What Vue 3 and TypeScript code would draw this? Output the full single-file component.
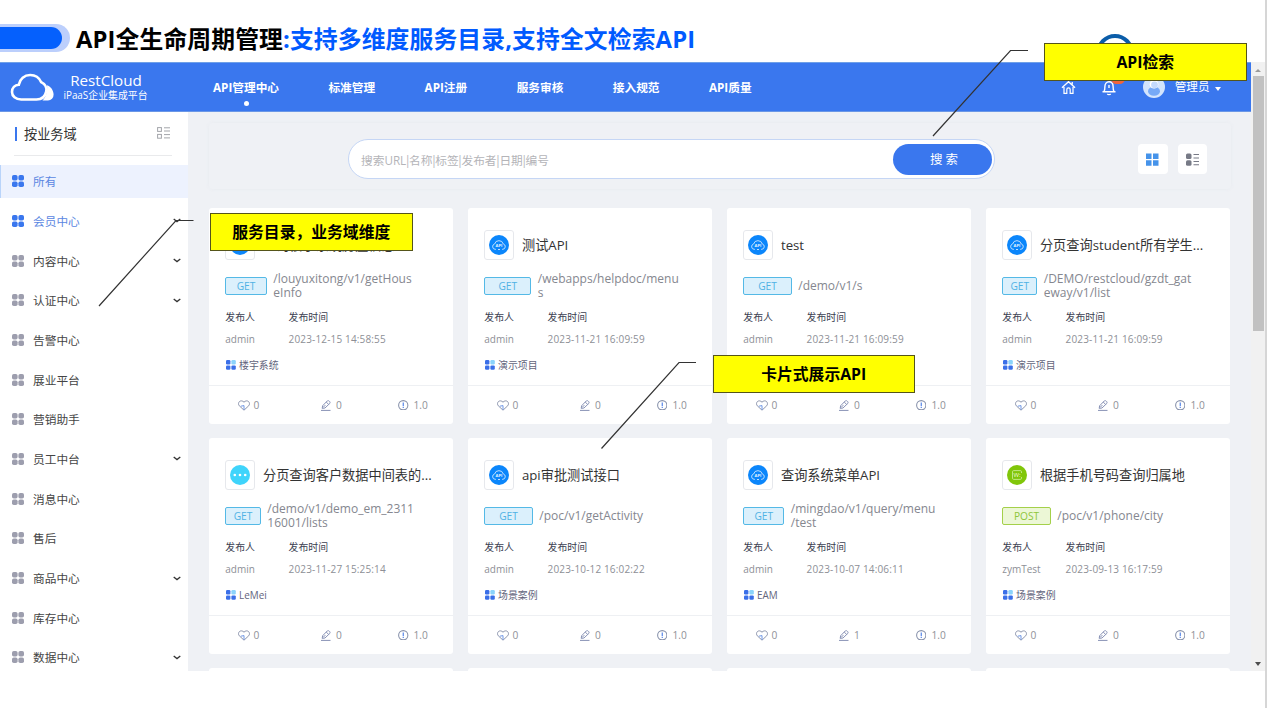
<script setup lang="ts">
interface MenuItem {
  label: string
  open?: boolean
  tone?: 'selected' | 'highlight'
}
interface ApiCard {
  title: string
  icon: 'api' | 'dots' | 'ws'
  method: 'GET' | 'POST'
  badge: number
  lines: string[]
  user: string
  time: string
  tag: string
  edits: number
}

const nav: string[] = ['API管理中心', '标准管理', 'API注册', '服务审核', '接入规范', 'API质量']
const searchFields: string[] = ['搜索URL', '名称', '标签', '发布者', '日期', '编号']

const menu: MenuItem[] = [
  { label: '所有', tone: 'selected' },
  { label: '会员中心', tone: 'highlight', open: true },
  { label: '内容中心', open: true },
  { label: '认证中心', open: true },
  { label: '告警中心' },
  { label: '展业平台' },
  { label: '营销助手' },
  { label: '员工中台', open: true },
  { label: '消息中心' },
  { label: '售后' },
  { label: '商品中心', open: true },
  { label: '库存中心' },
  { label: '数据中心', open: true },
]

const cards: ApiCard[] = [
  { title: '查询楼宇系统房屋信息', icon: 'api', method: 'GET', badge: 41.5, lines: ['/louyuxitong/v1/getHous', 'eInfo'], user: 'admin', time: '2023-12-15 14:58:55', tag: '楼宇系统', edits: 0 },
  { title: '测试API', icon: 'api', method: 'GET', badge: 47, lines: ['/webapps/helpdoc/menu', 's'], user: 'admin', time: '2023-11-21 16:09:59', tag: '演示项目', edits: 0 },
  { title: 'test', icon: 'api', method: 'GET', badge: 48.5, lines: ['/demo/v1/s'], user: 'admin', time: '2023-11-21 16:09:59', tag: '', edits: 0 },
  { title: '分页查询student所有学生...', icon: 'api', method: 'GET', badge: 35, lines: ['/DEMO/restcloud/gzdt_gat', 'eway/v1/list'], user: 'admin', time: '2023-11-21 16:09:59', tag: '演示项目', edits: 0 },
  { title: '分页查询客户数据中间表的...', icon: 'dots', method: 'GET', badge: 35.5, lines: ['/demo/v1/demo_em_2311', '16001/lists'], user: 'admin', time: '2023-11-27 15:25:14', tag: 'LeMei', edits: 0 },
  { title: 'api审批测试接口', icon: 'api', method: 'GET', badge: 48.5, lines: ['/poc/v1/getActivity'], user: 'admin', time: '2023-10-12 16:02:22', tag: '场景案例', edits: 0 },
  { title: '查询系统菜单API', icon: 'api', method: 'GET', badge: 41, lines: ['/mingdao/v1/query/menu', '/test'], user: 'admin', time: '2023-10-07 14:06:11', tag: 'EAM', edits: 1 },
  { title: '根据手机号码查询归属地', icon: 'ws', method: 'POST', badge: 48.5, lines: ['/poc/v1/phone/city'], user: 'zymTest', time: '2023-09-13 16:17:59', tag: '场景案例', edits: 0 },
]
</script>

<template>
  <div class="slide">
    <div class="heading">
      <div class="pill"><div class="pill-core"></div></div>
      <h1>API全生命周期管理<span>:支持多维度服务目录,支持全文检索API</span></h1>
    </div>

    <div class="window">
      <div class="app">
        <header>
          <svg class="logo" viewBox="0 0 44 29">
            <path d="M32.500 27.400H38a5.600 5.600 0 0 0 5.600-5.800c0-4.600-3.200-8.400-6.600-9.400.6 6.300-1 12-4.500 15.200z" fill="#fff" />
            <path d="M11.200 26.500C5.600 26.500 2 23.200 2 18.900c0-4 2.800-6.900 6.800-7.200C9.800 5.800 14.400 2 20.200 2c5 0 9 2.700 11 7.200 4 2 5.800 5.400 5 9.300-1 4.800-4.600 8-9.700 8z" fill="#3a77ee" stroke="#fff" stroke-width="2.600" />
          </svg>
          <div class="brand">
            <div class="brand-name">RestCloud</div>
            <div class="brand-sub">iPaaS企业集成平台</div>
          </div>
          <nav>
            <a v-for="(n, i) in nav" :key="n" :class="{ current: i === 0 }">{{ n }}</a>
          </nav>
          <div class="tools">
            <svg class="home" viewBox="0 0 16 16" fill="none" stroke="#fff" stroke-width="1.300">
              <path d="M1 8.300 8 1.800l7 6.500M12 4.800V2.200M3.200 7.500v6.800h3V10c0-1 .7-1.600 1.800-1.600s1.800.6 1.800 1.600v4.300h3V7.500" />
            </svg>
            <span class="bell">
              <svg viewBox="0 0 16 17" fill="none" stroke="#fff" stroke-width="1.400">
                <path d="M1.500 12.800h13M3 12.600c.8-1 .9-2 .9-5C3.900 4.700 5.500 2.800 8 2.800s4.100 1.900 4.100 4.800c0 3 .1 4 .9 5M6.300 14.900c.8.800 2.600.8 3.400 0M8 6v3" />
              </svg>
              <i></i>
            </span>
            <svg class="avatar" viewBox="0 0 22 22">
              <circle cx="11" cy="11" r="11" fill="#d3e4fd" />
              <ellipse cx="11" cy="15.200" rx="6" ry="4.600" fill="#76a9f7" />
              <circle cx="11" cy="8.200" r="4.300" fill="#fff" />
              <circle cx="11.500" cy="8.800" r="3.400" fill="#c4dafd" />
            </svg>
            <span class="who">管理员</span>
            <span class="caret"></span>
          </div>
        </header>

        <div class="body">
          <aside>
            <div class="side-head">
              <b></b><span>按业务域</span>
              <svg viewBox="0 0 13 12" fill="none" stroke="#a3a5aa">
                <rect x=".6" y=".6" width="3.800" height="3.800" /><rect x=".6" y="7.400" width="3.800" height="3.800" />
                <path d="M7 .8h6M7 4h6M7 7.600h6M7 10.900h6" />
              </svg>
            </div>
            <div class="side-line"></div>
            <div v-for="m in menu" :key="m.label" class="item" :class="m.tone">
              <svg class="quad" viewBox="0 0 12 12" fill="currentColor">
                <rect width="5.600" height="5.600" rx="1.800" /><rect x="6.400" width="5.600" height="5.600" rx="1.800" />
                <rect y="6.400" width="5.600" height="5.600" rx="1.800" /><rect x="6.400" y="6.400" width="5.600" height="5.600" rx="1.800" />
              </svg>
              <span>{{ m.label }}</span>
              <svg v-if="m.open" class="chev" viewBox="0 0 8 5" fill="none" stroke="#333" stroke-width="1.300"><path d="M.7 1 4 3.600 7.300 1" /></svg>
            </div>
          </aside>

          <main>
            <div class="panel">
              <div class="search">
                <p><template v-for="(f, i) in searchFields" :key="f"><i v-if="i > 0">|</i>{{ f }}</template></p>
                <button>搜 索</button>
              </div>
              <div class="views">
                <div>
                  <svg viewBox="0 0 13 13" fill="#4593ea"><path d="M0 .5h5.500V6H0zM7 .5h5.500V6H7zM0 7.300h5.500v5.500H0zM7 7.300h5.500v5.500H7z" /></svg>
                </div>
                <div>
                  <svg viewBox="0 0 13 13" fill="#777a86"><rect y=".5" width="5.500" height="5.500" rx="1.500" /><rect y="7.200" width="5.500" height="5.500" rx="1.500" /><path d="M7.500 1h5.500v1H7.500zM7.500 4.500h5.500v1H7.500zM7.500 8h5.500v1H7.500zM7.500 11.300h5.500v1H7.500z" /></svg>
                </div>
              </div>
            </div>

            <div class="grid">
              <article v-for="c in cards" :key="c.title">
                <div class="top">
                  <div class="thumb">
                    <svg v-if="c.icon === 'api'" viewBox="0 0 20 20">
                      <circle cx="10" cy="10" r="10" fill="#0b86fb" />
                      <path d="M7 14.300H6.200a2.700 2.700 0 0 1-.6-5.300 4.500 4.500 0 0 1 8.700 0 2.700 2.700 0 0 1-.6 5.300H13M9 14.500h2" fill="none" stroke="#cfe8ff" stroke-width=".9" />
                      <text x="10" y="12.200" text-anchor="middle" font-size="4.200" font-weight="700" fill="#e4f2ff">API</text>
                    </svg>
                    <svg v-else-if="c.icon === 'dots'" viewBox="0 0 20 20">
                      <circle cx="10" cy="10" r="10" fill="#3fd4fb" />
                      <g fill="#fff"><circle cx="4.800" cy="10" r="1.300" /><circle cx="10" cy="10" r="1.300" /><circle cx="15.200" cy="10" r="1.300" /></g>
                    </svg>
                    <svg v-else viewBox="0 0 20 20">
                      <circle cx="10" cy="10" r="10" fill="#80c60a" />
                      <path d="M14.500 8V6.800c0-.8-.4-1.200-1.200-1.200H6.700c-.8 0-1.200.4-1.200 1.200v6.400c0 .8.400 1.200 1.200 1.200h6.600c.8 0 1.200-.4 1.200-1.200V12" fill="none" stroke="#c8eb8e" stroke-width=".9" />
                      <text x="10" y="12.300" text-anchor="middle" font-size="6" fill="#eefbd5">W:</text>
                    </svg>
                  </div>
                  <h2>{{ c.title }}</h2>
                </div>
                <div class="route">
                  <span class="method" :class="{ post: c.method === 'POST' }" :style="{ width: c.badge + 'px' }">{{ c.method }}</span>
                  <div class="path"><div v-for="l in c.lines" :key="l">{{ l }}</div></div>
                </div>
                <div class="meta labels"><span>发布人</span><span>发布时间</span></div>
                <div class="meta values"><span>{{ c.user }}</span><span class="time">{{ c.time }}</span></div>
                <div class="tag">
                  <svg viewBox="0 0 10 10" fill="#3a6fe8"><rect width="4.400" height="4.400" rx="1.200" /><rect x="5.400" width="4.400" height="4.400" rx="1.200" fill="#8bd3fb" /><rect y="5.400" width="4.400" height="4.400" rx="1.200" /><rect x="5.400" y="5.400" width="4.400" height="4.400" rx="1.200" /></svg>
                  <span>{{ c.tag }}</span>
                </div>
                <footer>
                  <div class="stat like">
                    <svg viewBox="0 0 12 11" fill="none" stroke="#8b93ab"><path d="M6 10.200 1.300 5.800C.2 4.600.3 2.700 1.400 1.600 2.600.5 4.600.6 6 2.200 7.400.6 9.400.5 10.600 1.600c1.100 1.100 1.200 3 .1 4.200z" /><path d="M2.800 6.200 6 5.600v4.200" stroke="#6f97e6" /></svg>
                    <span>0</span>
                  </div>
                  <div class="stat edit">
                    <svg viewBox="0 0 10 11" fill="none" stroke="#8791b5"><path d="M0 10.400h9.500" /><path d="M1.200 8.400 1.600 5.800 6.200 1c.6-.5 1.300-.5 1.900 0l.6.600c.5.600.5 1.300 0 1.900L4 8zM5.300 2.100l2.500 2.500M2 7.500l2.400-2.400" /></svg>
                    <span>{{ c.edits }}</span>
                  </div>
                  <div class="stat ver">
                    <svg viewBox="0 0 10 10" fill="none"><circle cx="5" cy="5" r="4.400" stroke="#8690aa" /><path d="M5 2.300v3.600M5 6.600v1" stroke="#4d7fe6" stroke-width="1.100" /></svg>
                    <span>1.0</span>
                  </div>
                </footer>
              </article>
              <article v-for="n in 4" :key="n"></article>
            </div>
          </main>
        </div>
      </div>
      <div class="scroll">
        <i class="up"></i>
        <div class="thumb-bar"></div>
        <i class="down"></i>
      </div>
    </div>

    <div class="edge"></div>
    <svg class="ring" viewBox="0 0 40 40"><circle cx="20" cy="20" r="17" fill="none" stroke="#0b5da9" stroke-width="4" /></svg>
    <svg class="leaders" viewBox="0 0 1267 708" fill="none" stroke="#333" stroke-width="1.200">
      <path d="M933 136 1010.500 50.500H1028M99 306 176 220.500H193.500M601.500 448.500 679 362.500H696" />
    </svg>
    <div class="note n1">API检索</div>
    <div class="note n2">服务目录，业务域维度</div>
    <div class="note n3">卡片式展示API</div>
  </div>
</template>

<style>
html, body { margin: 0; overflow: hidden; background: #fff; }
</style>

<style scoped>
* { box-sizing: border-box; }
svg { display: block; flex: none; }
.slide { position: relative; width: 1267px; height: 708px; overflow: hidden; background: #fff; font-family: "Open Sans", "Noto Sans CJK SC", sans-serif; color: #333; }
.heading { height: 62px; display: flex; align-items: flex-start; }
.pill { flex: none; width: 69.5px; height: 28px; margin-top: 24px; padding: 3px 0; background: #bccffc; border-radius: 0 14px 14px 0; }
.pill-core { width: 62px; height: 22px; background: #0560fd; border-radius: 0 11px 11px 0; }
h1 { margin: 20.500px 0 0 6.5px; font-size: 23.8px; line-height: 36px; font-weight: 700; letter-spacing: .12px; color: #000; white-space: nowrap; }
h1 span { color: #005aff; }

.window { display: flex; width: 1265px; height: 609px; }
.app { width: 1251px; display: flex; flex-direction: column; }
header { flex: none; height: 50px; display: flex; align-items: center; background: #3a77ee; color: #fff; border-top: 1px solid #6fa0e8; border-bottom: 1px solid #6b97e6; }
.logo { width: 44px; height: 29px; margin-left: 10px; }
.brand { width: 104px; text-align: center; }
.brand-name { font-size: 15.200px; line-height: 18px; margin-top: -2px; }
.brand-sub { font-size: 9.900px; line-height: 13px; white-space: nowrap; margin-left: -1px; }
nav { display: flex; gap: 49.400px; margin-left: 55px; }
nav a { position: relative; font-size: 11.700px; line-height: 18px; font-weight: 700; white-space: nowrap; }
nav a.current::after { content: ""; position: absolute; left: 50%; margin-left: -2.500px; top: 23px; width: 5px; height: 5px; border-radius: 50%; background: #fff; }
.tools { margin-left: auto; display: flex; align-items: center; padding-right: 30.500px; }
.home { width: 15px; height: 15px; }
.bell { position: relative; margin-left: 25px; }
.bell svg { width: 16px; height: 17px; }
.bell i { position: absolute; left: 10px; top: -6px; width: 14px; height: 11px; border-radius: 6px; background: #f2643c; }
.avatar { width: 22px; height: 22px; margin-left: 26px; }
.who { font-size: 11.600px; line-height: 18px; margin-left: 9.500px; }
.caret { margin: 3px 0 0 5px; border: 3.500px solid transparent; border-top: 4px solid #fff; border-bottom: 0; }

.body { flex: 1; display: flex; min-height: 0; }
aside { flex: none; width: 188px; overflow: hidden; background: #fff; }
.side-head { display: flex; align-items: center; height: 43px; padding: 1px 18px 0 14.500px; }
.side-head b { width: 2.500px; height: 14.500px; background: #3a77ee; }
.side-head span { font-size: 13.200px; line-height: 20px; margin-left: 7px; }
.side-head svg { width: 13px; height: 12px; margin: -2px 0 0 auto; }
.side-line { height: 1px; margin: 0 16px 8.500px 14px; background: #e9eaec; }
.item { height: 39.700px; display: flex; align-items: center; padding: 0 7px 0 11.500px; font-size: 11.700px; color: #9d9eae; }
.item span { color: #444; margin-left: 9.500px; line-height: 18px; }
.item .quad { width: 12px; height: 12px; }
.item.selected { height: 33.500px; margin-bottom: 3px; background: #edf2fe; border-left: 1px solid #b9d4fa; padding-left: 10.500px; color: #3a77ee; }
.item.selected span, .item.highlight span { color: #5b87e2; }
.item.highlight { color: #3a77ee; }
.chev { width: 8px; height: 5px; margin-left: auto; }

main { flex: 1; min-width: 0; padding: 11px 20px 0 21px; overflow: hidden; background: #eff1f5; }
.panel { height: 66px; display: flex; align-items: center; padding: 8px 24px 0 139px; margin-bottom: 19px; border-radius: 4px; box-shadow: 0 0 4px rgba(120, 130, 150, .06); }
.search { width: 647px; height: 40px; margin-top: -2px; display: flex; align-items: center; padding: 0 2px 0 12px; border: 1px solid #c5d6f5; border-radius: 20px; background: #fff; }
.search p { margin: 0; font-size: 11.700px; color: #b4b4b8; white-space: nowrap; }
.search i { font-style: normal; margin: 0 -1.800px; }
.search button { width: 99px; height: 31px; margin-left: auto; padding: 0 0 0 3px; border: 0; border-radius: 16px; background: #3a77ee; color: #fff; font: 12.500px/31px "Open Sans", "Noto Sans CJK SC", sans-serif; }
.views { display: flex; gap: 10px; margin: -2px 0 0 auto; }
.views div { width: 29.500px; height: 29.500px; display: flex; align-items: center; justify-content: center; background: #fff; border-radius: 4px; }
.views svg { width: 13px; height: 13px; }

.grid { display: grid; grid-template-columns: repeat(4, 244.400px); column-gap: 14.600px; grid-auto-rows: 215.500px; row-gap: 14.500px; }
article { background: #fff; border-radius: 3px; padding: 22px 0 0 16.300px; overflow: hidden; }
.top { display: flex; align-items: center; height: 30px; }
.thumb { width: 29.700px; height: 30px; flex: none; display: flex; align-items: center; justify-content: center; border: 1px solid #e6e8ec; border-radius: 3px; }
.thumb svg { width: 20px; height: 20px; }
h2 { margin: 0 0 0 8px; font-size: 13.200px; line-height: 20px; font-weight: 400; color: #333; white-space: nowrap; }
.route { display: flex; align-items: center; height: 29px; margin-top: 11.500px; }
.method { flex: none; height: 18px; border: 1px solid #54b9e6; border-radius: 2px; background: #dbf0fc; color: #50b2e4; font-size: 10.200px; line-height: 17px; text-align: center; }
.method.post { border-color: #a4d04a; background: #ecf7d6; color: #8fc63a; }
.path { margin-left: 6.500px; font-size: 12px; line-height: 14.500px; color: #85878f; white-space: nowrap; }
.meta { display: flex; font-size: 9.900px; line-height: 16px; }
.meta span:first-child { width: 63.300px; }
.labels { margin-top: 8px; color: #3c3f52; }
.values { margin-top: 6.500px; color: #8d8f96; font-size: 10px; }
.time { letter-spacing: .15px; }
.tag { display: flex; align-items: center; margin-top: 9.500px; height: 16px; font-size: 9.900px; line-height: 16px; color: #62647c; }
.tag svg { width: 10px; height: 10px; margin: 0 3.500px 0 .300px; }
footer { display: flex; align-items: center; height: 38.500px; margin: 12px 0 0 -16.300px; padding: 1.500px 0 0 29px; border-top: 1px solid #eef0f3; font-size: 10.200px; color: #8f9198; }
.stat { display: flex; align-items: center; }
.like { width: 83px; }
.like svg { width: 12px; height: 11px; margin-right: 3.500px; }
.edit { width: 77px; }
.edit svg { width: 10px; height: 11px; margin-right: 5px; }
.ver svg { width: 10.500px; height: 10.500px; margin-right: 5px; }

.scroll { width: 14px; display: flex; flex-direction: column; align-items: center; background: #f1f1f1; }
.scroll .up { margin: 7px 0 4px; border: 3px solid transparent; border-bottom: 3px solid #9a9a9a; border-top: 0; }
.thumb-bar { width: 11px; height: 255px; background: #c1c1c1; }
.scroll .down { margin: auto 0 5px; border: 3px solid transparent; border-top: 4px solid #4d4d4d; border-bottom: 0; }

.edge { position: absolute; right: 0; top: 0; width: 2px; height: 708px; background: #d6d6d6; }
.ring { position: absolute; left: 1094.500px; top: 32.500px; width: 40px; height: 40px; clip-path: inset(0 0 25px 0); }
.leaders { position: absolute; left: 0; top: 0; width: 1267px; height: 708px; }
.note { position: absolute; width: 202.500px; height: 38px; background: #ff0; border: 1px solid #55551a; color: #000; font-size: 15.800px; line-height: 36px; font-weight: 700; text-align: center; white-space: nowrap; }
.n1 { left: 1044px; top: 43px; }
.n2 { left: 210px; top: 213px; }
.n3 { left: 712.500px; top: 355px; line-height: 37px; }
</style>
